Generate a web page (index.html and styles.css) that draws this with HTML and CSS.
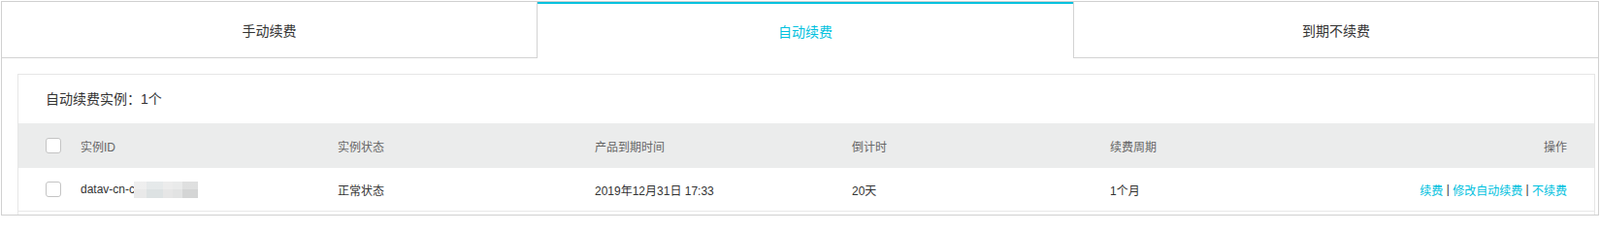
FILE: index.html
```html
<!DOCTYPE html>
<html lang="zh-CN">
<head>
<meta charset="utf-8">
<title>续费管理</title>
<link rel="stylesheet" href="styles.css">
</head>
<body>
<div class="frame">
  <div class="tabs">
    <div class="tab tab-first">手动续费</div>
    <div class="tab tab-active">自动续费</div>
    <div class="tab tab-last">到期不续费</div>
  </div>
  <div class="card">
    <div class="card-title">自动续费实例：1个</div>
    <div class="row head">
      <div class="cell"><span class="checkbox"></span></div>
      <div class="cell">实例ID</div>
      <div class="cell">实例状态</div>
      <div class="cell">产品到期时间</div>
      <div class="cell">倒计时</div>
      <div class="cell">续费周期</div>
      <div class="cell right">操作</div>
    </div>
    <div class="row data">
      <div class="cell"><span class="checkbox"></span></div>
      <div class="cell">datav-cn-c<span class="blur"></span></div>
      <div class="cell">正常状态</div>
      <div class="cell">2019年12月31日 17:33</div>
      <div class="cell">20天</div>
      <div class="cell">1个月</div>
      <div class="cell right"><a class="link">续费</a> | <a class="link">修改自动续费</a> | <a class="link">不续费</a></div>
    </div>
  </div>
</div>
</body>
</html>
```

FILE: styles.css
```css
html, body {
  margin: 0;
  padding: 0;
  background: #fff;
}
body {
  font-family: "Liberation Sans", "Noto Sans CJK SC", sans-serif;
  color: #333;
}
.frame {
  margin: 1px 1px 0 1px;
  height: 221px;
  box-sizing: border-box;
  border: 1px solid #d0d0d0;
  overflow: hidden;
}
.tabs {
  display: flex;
  height: 58px;
}
.tab {
  box-sizing: border-box;
  height: 58px;
  display: flex;
  align-items: center;
  justify-content: center;
  font-size: 14px;
  color: #333;
}
.tab-first {
  width: 552px;
  flex: none;
  border-right: 1px solid #d3d3d3;
  border-bottom: 1px solid #d3d3d3;
}
.tab-active {
  width: 552px;
  flex: none;
  border-top: 2px solid #00c1de;
  color: #00c1de;
}
.tab-last {
  flex: 1;
  border-left: 1px solid #d3d3d3;
  border-bottom: 1px solid #d3d3d3;
}
.card {
  margin: 16px 3px 0 16px;
  border: 1px solid #e6e6e6;
  height: 200px;
}
.card-title {
  height: 50px;
  line-height: 50px;
  padding-left: 28px;
  font-size: 14px;
  color: #333;
}
.row {
  display: grid;
  grid-template-columns: 36px 265px 265px 265px 266px 265px 1fr;
  align-items: center;
  padding: 0 28px;
  font-size: 12px;
}
.head {
  height: 46px;
  background: #ebecec;
  color: #666;
}
.data {
  height: 44px;
  border-bottom: 1px solid #e8e8e8;
  color: #333;
}
.cell {
  display: flex;
  align-items: center;
  white-space: nowrap;
}
.right {
  justify-content: flex-end;
  white-space: pre;
}
.checkbox {
  display: block;
  width: 16px;
  height: 16px;
  box-sizing: border-box;
  border: 1px solid #c4c4c4;
  border-radius: 3px;
  background: #fff;
}
.blur {
  display: inline-block;
  width: 66px;
  height: 17px;
  margin-left: -1px;
  background:
    linear-gradient(180deg, rgba(255,255,255,0.25) 0 50%, rgba(0,0,0,0) 50% 100%),
    linear-gradient(90deg, #e9e9e9 0 13px, #dde2e3 13px 30px, #e6e6e6 30px 40px, #e2e3e3 40px 50px, #d4d5d5 50px 66px);
}
.link {
  color: #00c1de;
  text-decoration: none;
}
```
